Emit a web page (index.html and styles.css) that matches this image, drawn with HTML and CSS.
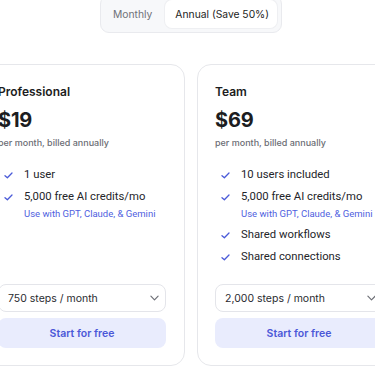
FILE: index.html
```html
<!DOCTYPE html>
<html>
<head>
<meta charset="utf-8">
<link rel="stylesheet" href="styles.css">
</head>
<body>
<div class="page">
  <div class="toggle-row">
    <div class="toggle">
      <span class="opt">Monthly</span>
      <span class="opt active">Annual (Save 50%)</span>
    </div>
  </div>
  <div class="cards">
    <div class="card">
      <div class="title">Professional</div>
      <div class="price">$19</div>
      <div class="note">per month, billed annually</div>
      <ul class="features">
        <li><span class="check"><svg viewBox="0 0 10 8" width="9" height="7"><path d="M1 4.2 L3.7 6.6 L9 1.2" fill="none" stroke="currentColor" stroke-width="1.5" stroke-linecap="round" stroke-linejoin="round"/></svg></span><div><div class="ft">1 user</div></div></li>
        <li><span class="check"><svg viewBox="0 0 10 8" width="9" height="7"><path d="M1 4.2 L3.7 6.6 L9 1.2" fill="none" stroke="currentColor" stroke-width="1.5" stroke-linecap="round" stroke-linejoin="round"/></svg></span><div><div class="ft">5,000 free AI credits/mo</div><div class="sub">Use with GPT, Claude, &amp; Gemini</div></div></li>
      </ul>
      <div class="select"><span>750 steps / month</span><svg viewBox="0 0 10 6" width="9" height="6"><path d="M1 1 L5 5 L9 1" fill="none" stroke="currentColor" stroke-width="1.3" stroke-linecap="round" stroke-linejoin="round"/></svg></div>
      <div class="btn">Start for free</div>
    </div>
    <div class="card">
      <div class="title">Team</div>
      <div class="price">$69</div>
      <div class="note">per month, billed annually</div>
      <ul class="features">
        <li><span class="check"><svg viewBox="0 0 10 8" width="9" height="7"><path d="M1 4.2 L3.7 6.6 L9 1.2" fill="none" stroke="currentColor" stroke-width="1.5" stroke-linecap="round" stroke-linejoin="round"/></svg></span><div><div class="ft">10 users included</div></div></li>
        <li><span class="check"><svg viewBox="0 0 10 8" width="9" height="7"><path d="M1 4.2 L3.7 6.6 L9 1.2" fill="none" stroke="currentColor" stroke-width="1.5" stroke-linecap="round" stroke-linejoin="round"/></svg></span><div><div class="ft">5,000 free AI credits/mo</div><div class="sub">Use with GPT, Claude, &amp; Gemini</div></div></li>
        <li><span class="check"><svg viewBox="0 0 10 8" width="9" height="7"><path d="M1 4.2 L3.7 6.6 L9 1.2" fill="none" stroke="currentColor" stroke-width="1.5" stroke-linecap="round" stroke-linejoin="round"/></svg></span><div><div class="ft">Shared workflows</div></div></li>
        <li><span class="check"><svg viewBox="0 0 10 8" width="9" height="7"><path d="M1 4.2 L3.7 6.6 L9 1.2" fill="none" stroke="currentColor" stroke-width="1.5" stroke-linecap="round" stroke-linejoin="round"/></svg></span><div><div class="ft">Shared connections</div></div></li>
      </ul>
      <div class="select"><span>2,000 steps / month</span><svg viewBox="0 0 10 6" width="9" height="6"><path d="M1 1 L5 5 L9 1" fill="none" stroke="currentColor" stroke-width="1.3" stroke-linecap="round" stroke-linejoin="round"/></svg></div>
      <div class="btn">Start for free</div>
    </div>
  </div>
</div>
</body>
</html>
```
FILE: styles.css
```css
* { box-sizing: border-box; }
html, body { margin: 0; padding: 0; background: #ffffff; overflow: hidden; }
body { font-family: Inter, "Liberation Sans", sans-serif; color: #1c1d21; width: 375px; height: 366px; }
.page { display: flex; flex-direction: column; }
.toggle-row { display: flex; padding-left: 100px; margin-top: -5px; }
.toggle { display: flex; gap: 4px; padding: 4px; border: 1px solid #e9eaee; border-radius: 9px; background: #f7f8fa; }
.opt { height: 28px; display: flex; align-items: center; font-size: 10.3px; color: #6f7178; padding: 0 9px 0 8px; border-radius: 7px; }
.opt.active { background: #fff; color: #1c1d21; padding: 0 8px 0 10px; box-shadow: 0 0 0 1px #eeeff2; }
.cards { display: flex; gap: 12px; margin-left: -20px; margin-top: 31px; align-items: stretch; }
.card { flex: 0 0 205px; width: 205px; border: 1px solid #e6e7eb; border-radius: 14px; padding: 17px 18px 17px 17px; display: flex; flex-direction: column; }
.title { font-size: 12px; font-weight: 600; line-height: 20px; color: #1c1d21; }
.price { font-size: 20px; font-weight: 700; line-height: 24px; margin-top: 6px; letter-spacing: -0.2px; }
.note { font-size: 9px; line-height: 14px; color: #6b6d74; margin-top: 4px; font-weight: 500; }
.features { list-style: none; margin: 16px 0 18px; padding: 0 0 0 6px; display: flex; flex-direction: column; gap: 4px; }
.features li { display: flex; align-items: flex-start; }
.check { width: 20px; height: 18px; flex: 0 0 20px; display: flex; align-items: center; color: #4a5ad8; }
.ft { font-family: Roboto, "Noto Sans", sans-serif; font-size: 11.3px; line-height: 18px; color: #24252a; }
.sub { font-family: Roboto, "Noto Sans", sans-serif; font-size: 9.5px; line-height: 16px; color: #4f5fe0; }
.select { margin-top: auto; height: 28px; border: 1px solid #e4e5ea; border-radius: 8px; display: flex; align-items: center; justify-content: space-between; padding: 0 6px 0 9px; font-size: 10.5px; color: #2a2b30; }
.select svg { color: #6d6f76; }
.btn { margin-top: 6px; height: 30px; border-radius: 8px; background: #e9ecfd; color: #4b58d8; font-size: 10.5px; font-weight: 600; display: flex; align-items: center; justify-content: center; }
```
